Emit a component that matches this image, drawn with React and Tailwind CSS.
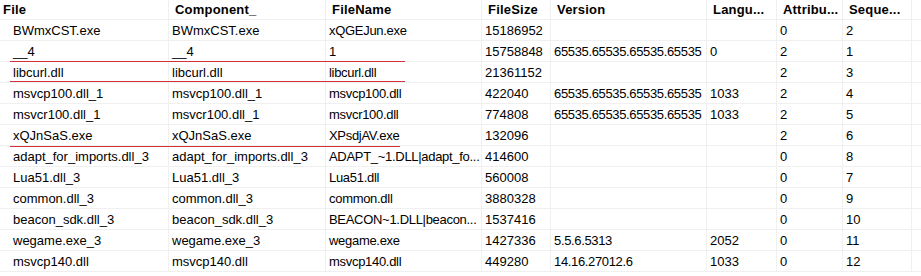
const columns = ['File', 'Component_', 'FileName', 'FileSize', 'Version', 'Langu...', 'Attribu...', 'Seque...']

const rows = [
  ['BWmxCST.exe', 'BWmxCST.exe', 'xQGEJun.exe', '15186952', '', '', '0', '2'],
  ['__4', '__4', '1', '15758848', '65535.65535.65535.65535', '0', '2', '1'],
  ['libcurl.dll', 'libcurl.dll', 'libcurl.dll', '21361152', '', '', '2', '3'],
  ['msvcp100.dll_1', 'msvcp100.dll_1', 'msvcp100.dll', '422040', '65535.65535.65535.65535', '1033', '2', '4'],
  ['msvcr100.dll_1', 'msvcr100.dll_1', 'msvcr100.dll', '774808', '65535.65535.65535.65535', '1033', '2', '5'],
  ['xQJnSaS.exe', 'xQJnSaS.exe', 'XPsdjAV.exe', '132096', '', '', '2', '6'],
  ['adapt_for_imports.dll_3', 'adapt_for_imports.dll_3', 'ADAPT_~1.DLL|adapt_fo...', '414600', '', '', '0', '8'],
  ['Lua51.dll_3', 'Lua51.dll_3', 'Lua51.dll', '560008', '', '', '0', '7'],
  ['common.dll_3', 'common.dll_3', 'common.dll', '3880328', '', '', '0', '9'],
  ['beacon_sdk.dll_3', 'beacon_sdk.dll_3', 'BEACON~1.DLL|beacon...', '1537416', '', '', '0', '10'],
  ['wegame.exe_3', 'wegame.exe_3', 'wegame.exe', '1427336', '5.5.6.5313', '2052', '0', '11'],
  ['msvcp140.dll', 'msvcp140.dll', 'msvcp140.dll', '449280', '14.16.27012.6', '1033', '0', '12'],
]

const gridCols = 'grid grid-cols-[169px_157px_156px_69px_156px_70px_66px_69px_1fr]'

function App() {
  return (
    <div className="relative w-[921px] h-[276px] overflow-hidden bg-white text-black font-['Liberation_Sans',Arial,sans-serif]">
      {/* header */}
      <div className={`${gridCols} h-[20px] border-b border-[#f0f0f0]`}>
        {columns.map((c, i) => (
          <div
            key={c}
            className={`flex items-center whitespace-nowrap overflow-hidden text-[13px] font-bold tracking-[0.2px] border-r border-[#f0f0f0] ${i === 0 ? 'pl-[3px]' : 'pl-[6px]'}`}
          >
            {c}
          </div>
        ))}
        <div />
      </div>

      {/* rows */}
      {rows.map((r, ri) => (
        <div key={ri} className={`${gridCols} h-[21px] border-b border-[#f0f0f0]`}>
          {r.map((v, i) => (
            <div
              key={i}
              className={`flex items-center pt-px whitespace-nowrap overflow-hidden text-[13px] border-r border-[#f0f0f0] ${i === 0 ? 'pl-[13px]' : 'pl-[3px]'} ${i === 4 ? 'tracking-[-0.35px]' : ''} ${i === 2 ? 'tracking-[-0.3px]' : ''}`}
            >
              {v}
            </div>
          ))}
          <div />
        </div>
      ))}

      {/* red annotation lines */}
      <div className="absolute z-10 left-[10px] top-[61px] w-[395px] h-px bg-[#d4323a]" />
      <div className="absolute z-10 left-[10px] top-[81px] w-[395px] h-px bg-[#d4323a]" />
      <div className="absolute z-10 left-[10px] top-[146px] w-[390px] h-px bg-[#d4323a]" />
    </div>
  )
}

export default App
